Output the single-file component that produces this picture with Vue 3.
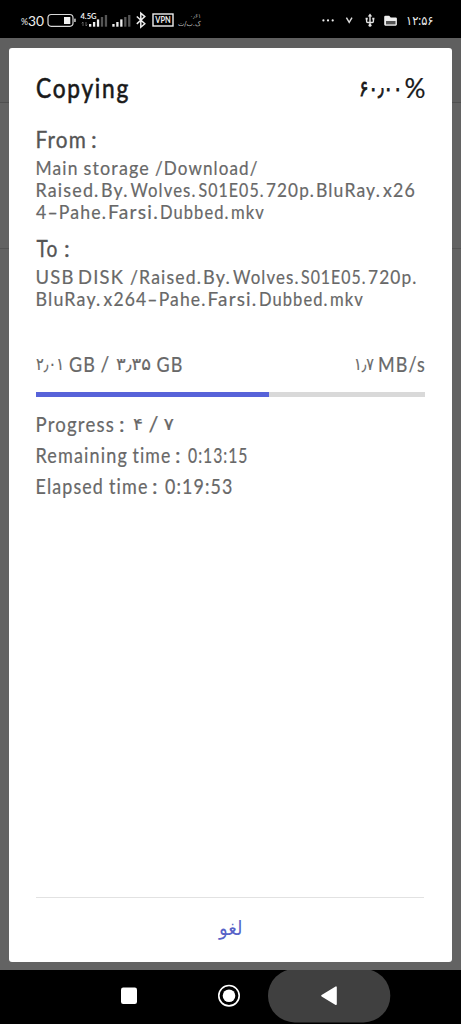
<script setup>
// Each word is [text, x, width, kind]; x is measured from the left edge of the screen.
const sections = [
  { cls: 'title', base: 28, words: [['Copying', 36, 94], ['۶۰٫۰۰', 359, 43.5, 'fa'], ['%', 404.5, 21, 'pct']] },
  { cls: 'label', base: 20, words: [['From', 35.5, 51.5], [':', 91, 7]] },
  { cls: 'path', base: 19, words: [['Main', 35.5, 43], ['storage', 83.5, 66.5], ['/Download/', 155, 103.5]] },
  { cls: 'path', base: 19, words: [['Raised.', 35.5, 64], ['By.', 101, 27.5], ['Wolves.', 130.5, 66], ['S01E05.', 198.5, 66], ['720p.', 266, 49], ['BluRay.', 316, 65], ['x26', 383, 33]] },
  { cls: 'path', base: 19, words: [['4–Pahe.', 36, 71], ['Farsi.', 108, 51], ['Dubbed.', 160, 69.5], ['mkv', 231, 34]] },
  { cls: 'label to', base: 20, words: [['To', 36.5, 22], [':', 64, 7]] },
  { cls: 'path', base: 19, words: [['USB', 35.5, 39], ['DISK', 78, 46], ['/Raised.', 130, 72], ['By.', 203, 28], ['Wolves.', 233, 66.5], ['S01E05.', 301, 65.5], ['720p.', 368, 49.5]] },
  { cls: 'path', base: 19, words: [['BluRay.', 35.5, 66], ['x264–Pahe.', 103.5, 103], ['Farsi.', 207.5, 50], ['Dubbed.', 259, 69.5], ['mkv', 330, 34]] },
]
const amount = { cls: 'amount', base: 20, words: [['۲٫۰۱', 36, 28, 'fa'], ['GB', 69, 27], ['/', 100.5, 10], ['۳٫۳۵', 116, 35, 'fa'], ['GB', 156.5, 27], ['۱٫۷', 354, 20, 'fa'], ['MB/s', 378, 48]] }
const stats = [
  { cls: 'stat', base: 21, words: [['Progress', 35.5, 79.5], [':', 119, 7], ['۴', 133, 10, 'fa'], ['/', 148.5, 10], ['۷', 163.5, 10.5, 'fa']] },
  { cls: 'stat', base: 21, words: [['Remaining', 35.5, 92.5], ['time', 132.5, 39], [':', 175, 7], ['0:13:15', 188, 60.5]] },
  { cls: 'stat', base: 21, words: [['Elapsed', 35.5, 68.5], ['time', 109, 39.5], [':', 152, 7], ['0:19:53', 165, 68.5]] },
]
const rise = (line, word) => line.base - (word[3] === 'fa' ? (line.cls === 'title' ? 2.5 : 1.8) : 0)
const signals = [89, 112.3]
const bars = [2.7, 4.7, 7.3, 9.7, 11.7]
const progress = 60
</script>

<template>
  <div class="screen">
    <header class="status">
      <svg width="461" height="38" viewBox="0 0 461 38">
        <text class="st" x="21" y="24.5" font-size="8.5" textLength="7" lengthAdjust="spacingAndGlyphs">%</text>
        <text class="st" x="28" y="25.5" font-size="14" textLength="16" lengthAdjust="spacingAndGlyphs">30</text>
        <rect x="48" y="14.5" width="25" height="11.8" rx="3.2" fill="none" stroke="#d8d8d8" stroke-width="1.2" />
        <rect x="64" y="17" width="6.3" height="7" fill="#f2f2f2" />
        <rect x="74.2" y="18.5" width="1.5" height="3.6" rx=".6" fill="#d8d8d8" />
        <g v-for="(s, i) in signals" :key="i">
          <rect v-for="(h, n) in bars" :key="n" :x="s + n * 3.95" :y="26.7 - h" width="2.3" :height="h" :fill="n < 3 ? '#eee' : '#555'" />
        </g>
        <text class="st bold" x="80.5" y="19" font-size="7" textLength="16" lengthAdjust="spacingAndGlyphs">4.5G</text>
        <path d="M83 26v-4l-1.3 1.3M86 22v4l1.3-1.3" fill="none" stroke="#777" stroke-width=".8" />
        <path d="M136.8 16.5l8 7.3-4 3.4V13.2l4 3.4-8 7.3" fill="none" stroke="#eee" stroke-width="1.5" />
        <rect x="153" y="14" width="20" height="12" fill="none" stroke="#eee" stroke-width="1.4" />
        <text class="st bold" x="155.3" y="23.2" font-size="8.5" textLength="15.4" lengthAdjust="spacingAndGlyphs">VPN</text>
        <text class="tiny" x="190" y="18.3" font-size="6" textLength="11" lengthAdjust="spacingAndGlyphs">۰٫۶۱</text>
        <text class="tiny" x="178" y="25.8" font-size="7" textLength="23" lengthAdjust="spacingAndGlyphs">ک.ب/ت</text>
        <g fill="#eee">
          <circle cx="323.4" cy="20.4" r="1.1" /><circle cx="328" cy="20.4" r="1.1" /><circle cx="332.7" cy="20.4" r="1.1" />
        </g>
        <path d="M346.4 17.6l2.8 4.8 2.8-4.8" fill="none" stroke="#ddd" stroke-width="1.4" />
        <g fill="none" stroke="#e4e4e4" stroke-width="1.4">
          <path d="M370 16v9M366.6 18.5v2.8q0 1.2 1.2 1.2h4.4q1.2 0 1.2-1.2v-2.8" />
          <path d="M370 13.5l2.2 3h-4.4zM365.6 17.8h2.1v1.6h-2.1zM372.3 17.8h2.1v1.6h-2.1z" fill="#e4e4e4" stroke="none" />
          <circle cx="370" cy="25.3" r="1.5" fill="#e4e4e4" stroke="none" />
        </g>
        <path d="M384.2 17q0-1.2 1.2-1.2h3.8l1.5 1.6h5q1.2 0 1.2 1.2v6q0 1.1-1.2 1.1h-10.3q-1.2 0-1.2-1.1z" fill="#eee" />
        <path d="M386 21h9.5v3.4H386z" fill="#555" />
        <text class="st time" x="406" y="25.2" textLength="27.5" lengthAdjust="spacingAndGlyphs">۱۲:۵۶</text>
      </svg>
    </header>

    <main class="backdrop">
      <section class="card">
        <div class="body">
          <svg v-for="(l, i) in sections" :key="i" class="line" :class="l.cls">
            <text><template v-for="(w, n) in l.words" :key="n"><tspan :class="w[3]" :x="w[1] - 36" :y="rise(l, w)" :textLength="w[2]" lengthAdjust="spacingAndGlyphs">{{ w[0] }}</tspan>{{ ' ' }}</template></text>
          </svg>
          <svg class="line" :class="amount.cls">
            <text><template v-for="(w, n) in amount.words" :key="n"><tspan :class="w[3]" :x="w[1] - 36" :y="rise(amount, w)" :textLength="w[2]" lengthAdjust="spacingAndGlyphs">{{ w[0] }}</tspan>{{ ' ' }}</template></text>
          </svg>
          <div class="track"><div class="fill" :style="{ width: progress + '%' }"></div></div>
          <svg v-for="(l, i) in stats" :key="'s' + i" class="line" :class="l.cls">
            <text><template v-for="(w, n) in l.words" :key="n"><tspan :class="w[3]" :x="w[1] - 36" :y="rise(l, w)" :textLength="w[2]" lengthAdjust="spacingAndGlyphs">{{ w[0] }}</tspan>{{ ' ' }}</template></text>
          </svg>
        </div>
        <button class="cancel">
          <svg width="388" height="62">
            <text x="183" y="36" textLength="23.5" lengthAdjust="spacingAndGlyphs">لغو</text>
          </svg>
        </button>
      </section>
    </main>

    <nav class="nav">
      <svg width="461" height="54" viewBox="0 0 461 54">
        <rect x="268" y="-1" width="122.3" height="53.4" rx="26.7" fill="#404040" />
        <rect x="121" y="17.5" width="16" height="16.5" rx="2.2" fill="#fff" />
        <circle cx="229" cy="25.7" r="10.2" fill="none" stroke="#fff" stroke-width="1.6" />
        <circle cx="229" cy="25.7" r="6.3" fill="#fff" />
        <path d="M322 25.7l14-8.5v17z" fill="#fff" stroke="#fff" stroke-width="1.6" stroke-linejoin="round" />
      </svg>
    </nav>
  </div>
</template>

<style>
body { background: #000; }
</style>

<style scoped>
.screen { width: 461px; height: 1024px; display: flex; flex-direction: column; background: #000; overflow: hidden; font-family: Lato, "DejaVu Sans", sans-serif; }
svg { display: block; }
.status { height: 38px; flex: none; }
.st { fill: #eee; font-family: Lato, "DejaVu Sans", sans-serif; }
.bold { font-weight: 700; }
.time { font-size: 12.5px; }
.tiny { fill: #bbb; font-family: "DejaVu Sans", sans-serif; }
.backdrop {
  height: 932px; flex: none; box-sizing: border-box; padding: 9.5px 9px 8.5px;
  background: linear-gradient(#5f5f5f 0 64px, #505050 64px 65px, #636363 65px 210px, #555 210px 211px, #636363 211px);
}
.card { height: 914px; box-sizing: border-box; padding: 22.5px 27px 0; border-radius: 3px; background: #fff; display: flex; flex-direction: column; }
.body { flex: 1; }
.line { width: 400px; height: 22px; overflow: visible; fill: #686868; stroke: #686868; stroke-width: .2px; font-size: 20px; letter-spacing: 1.3px; }
.fa { font-family: "DejaVu Sans", sans-serif; font-size: .84em; letter-spacing: 0; }
.title { height: 58px; fill: #191919; stroke: #191919; stroke-width: .6px; font-size: 26px; letter-spacing: 2px; }
.title .fa { stroke-width: .8px; }
.pct { stroke-width: .2px; letter-spacing: 0; }
.label { height: 28px; fill: #555; stroke: #555; stroke-width: .35px; font-size: 23px; }
.to { margin-top: 14.7px; }
.amount { margin-top: 43.3px; height: 40.3px; font-size: 20.5px; }
.track { width: 388.5px; height: 4.6px; background: #d9d9d9; }
.fill { height: 100%; background: #5763d9; }
.stat { height: 31px; font-size: 20.5px; }
.track + .stat { margin-top: 14px; }
.cancel { display: block; border: 0; border-top: 1px solid #e2e2e2; padding: 0; margin: 0; width: 388px; height: 64.5px; background: none; fill: #5763c8; font: 20px "DejaVu Sans", sans-serif; }
.nav { height: 54px; flex: none; }
</style>
